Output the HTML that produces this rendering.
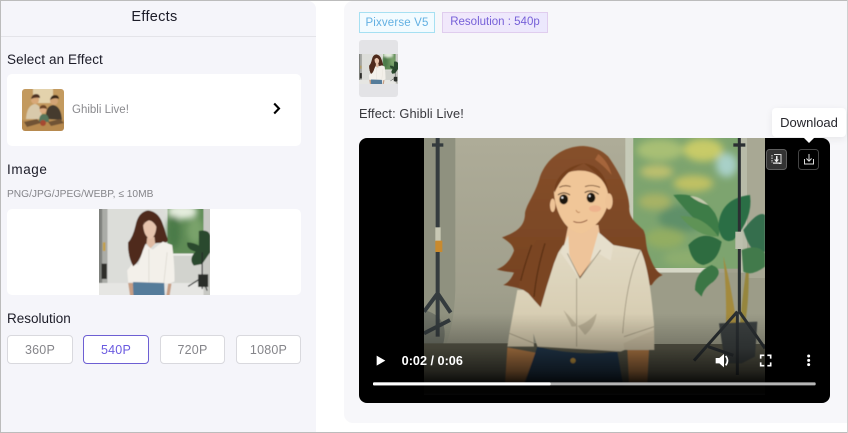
<!DOCTYPE html>
<html lang="en">
<head>
<meta charset="utf-8">
<title>Effects</title>
<style>
html,body{margin:0;padding:0;width:848px;height:433px;overflow:hidden;background:#fff;font-family:"Liberation Sans",sans-serif}
#r{position:relative;width:848px;height:433px;overflow:hidden;background:#fff}
.a{position:absolute;box-sizing:border-box;white-space:nowrap}
.l{font-size:13.5px;color:#1c1c28;letter-spacing:.1px;line-height:16px;height:16px}
.b{top:335px;height:29px;background:#fff;border:1px solid #d9d9de;border-radius:4px;font-size:12.5px;color:#85858a;text-align:center;line-height:28px;letter-spacing:.2px}
svg{position:absolute;display:block}
</style>
</head>
<body>
<div id="r">
<svg width="0" height="0" style="position:absolute">
<defs>
<filter id="pb" x="-5%" y="-5%" width="110%" height="110%"><feGaussianBlur stdDeviation="1.4"/></filter>
<filter id="pg" x="-20%" y="-20%" width="140%" height="140%"><feGaussianBlur stdDeviation="9"/></filter>
<symbol id="photo" viewBox="0 0 334 258" preserveAspectRatio="xMidYMid slice">
<g filter="url(#pb)">
<rect x="-4" y="-4" width="342" height="266" fill="#d8d9d5"/>
<rect x="-4" y="-4" width="30" height="266" fill="#7f817d"/>
<rect x="10" y="-4" width="16" height="266" fill="#aaaca7"/>
<path d="M8 164h16v46H8z" fill="#2d2d2b"/><rect x="12" y="100" width="8" height="26" fill="#c2a04c"/>
<rect x="26" y="-4" width="180" height="266" fill="#dcddd9"/>
<rect x="-4" y="222" width="342" height="40" fill="#e6e6e3"/>
<rect x="206" y="-4" width="108" height="138" fill="#5f8c56"/>
<g filter="url(#pg)"><ellipse cx="250" cy="8" rx="45" ry="22" fill="#e4ecdd"/><ellipse cx="225" cy="70" rx="20" ry="50" fill="#4c7a48"/><ellipse cx="290" cy="65" rx="24" ry="40" fill="#79a26a"/></g>
<rect x="206" y="134" width="108" height="6" fill="#efefeb"/>
<rect x="206" y="140" width="128" height="82" fill="#d2d3ce"/>
<rect x="314" y="-4" width="24" height="266" fill="#c8c9c4"/>
<path d="M300 66Q330 60 334 80V130L310 165 285 170Q268 150 290 128 262 120 265 100Q285 100 300 110Z" fill="#2a4a2d"/>
<path d="M310 130V240M310 205L268 232M310 205L325 245" stroke="#26292a" stroke-width="3.5" fill="none"/>
<rect x="298" y="196" width="30" height="38" fill="#2b2d2b"/>
<path d="M148 4Q118 8 110 50 102 85 88 100 86 140 103 172 120 160 130 125L140 105 200 100Q212 100 203 80 198 60 190 40 178 8 148 4Z" fill="#4f2c1d"/>
<path d="M145 86l22-2 2 20-14 14-12-14z" fill="#e0bba3"/>
<path d="M138 107L162 122 192 98 220 108Q228 170 227 218L209 224 193 222 108 220 88 220 85 184 104 160 118 168Z" fill="#f3f0ea"/>
<path d="M150 120V220M205 130L195 222" stroke="#d8d4cc" stroke-width="2" fill="none"/>
<path d="M103 219L196 222 198 262H93Z" fill="#557b9a"/>
<path d="M88 222l6 40h10l-2-40zM208 224l-6 38h10l6-38z" fill="#c79e84"/>
<path d="M118 40Q105 85 88 100 86 140 103 172 122 160 132 125L142 100 134 60Z" fill="#4f2c1d"/>
<path d="M133 50Q135 30 155 30 176 35 172 60 168 85 155 90 136 84 133 50Z" fill="#e6c3ac"/>
<path d="M133 50Q140 20 160 22 178 30 176 60 165 35 150 34 138 38 133 50Z" fill="#4f2c1d"/>
</g>
</symbol>
<filter id="sf" x="-5%" y="-5%" width="110%" height="110%"><feGaussianBlur stdDeviation="1.6"/></filter>
<filter id="sg" x="-20%" y="-20%" width="140%" height="140%"><feGaussianBlur stdDeviation="11"/></filter>
<filter id="tb" x="-5%" y="-5%" width="110%" height="110%"><feGaussianBlur stdDeviation=".6"/></filter>
<linearGradient id="fade" x1="0" y1="0" x2="0" y2="1">
<stop offset="0" stop-color="#000" stop-opacity="0"/>
<stop offset=".5" stop-color="#000" stop-opacity=".25"/>
<stop offset=".82" stop-color="#000" stop-opacity=".6"/>
<stop offset="1" stop-color="#000" stop-opacity=".9"/>
</linearGradient>
<linearGradient id="wall" x1="0" y1="0" x2="0" y2="1">
<stop offset="0" stop-color="#aeac98"/>
<stop offset=".6" stop-color="#a09f8c"/>
<stop offset="1" stop-color="#868776"/>
</linearGradient>
<linearGradient id="hair" x1="0" y1="0" x2="0" y2="1">
<stop offset="0" stop-color="#86502b"/>
<stop offset="1" stop-color="#744020"/>
</linearGradient>
<linearGradient id="shirt" x1="0" y1="0" x2="0" y2="1">
<stop offset="0" stop-color="#e2dac4"/>
<stop offset="1" stop-color="#d2c7aa"/>
</linearGradient>
<linearGradient id="tg" x1="0" y1="0" x2="1" y2="0">
<stop offset="0" stop-color="#f1e8fb"/>
<stop offset="1" stop-color="#ece8fd"/>
</linearGradient>
</defs>
</svg>

<!-- window frame -->
<div class="a" style="left:0;top:0;width:848px;height:1px;background:#bcbcbc"></div>
<div class="a" style="left:0;top:432px;width:848px;height:1px;background:#bcbcbc"></div>
<div class="a" style="left:0;top:0;width:1px;height:433px;background:#bcbcbc"></div>
<div class="a" style="left:847px;top:0;width:1px;height:433px;background:#cfcfcf"></div>

<!-- left panel -->
<div class="a" style="left:1px;top:1px;width:315px;height:431px;background:#f5f5fa;border-top-right-radius:8px"></div>
<div class="a" style="left:1px;top:36px;width:315px;height:1px;background:#e4e4e9"></div>
<div class="a" style="left:1px;top:8px;width:307px;text-align:center;font-size:14.5px;line-height:18px;color:#1c1c28;letter-spacing:.3px">Effects</div>
<div class="a l" style="left:7px;top:52px">Select an Effect</div>

<div class="a" style="left:7px;top:74px;width:294px;height:72px;background:#fff;border-radius:5px"></div>
<svg style="left:22px;top:89px" width="42" height="42" viewBox="0 0 42 42">
<clipPath id="c1"><rect width="42" height="42" rx="3"/></clipPath>
<g clip-path="url(#c1)"><g filter="url(#tb)">
<rect x="-2" y="-2" width="46" height="46" fill="#c39a5f"/>
<rect x="11" y="-2" width="20" height="16" fill="#e3d2ac"/>
<rect x="-2" y="31" width="46" height="13" fill="#b78a50"/>
<path d="M4 30q1-14 9-15 7 1 7 15z" fill="#d8c9ab"/>
<circle cx="13" cy="11" r="4" fill="#d8a878"/>
<path d="M9 10q1-5 5-5 4 0 4 4-5-1-9 1z" fill="#4f3120"/>
<path d="M24 30q-1-13 7-14 8 1 9 15z" fill="#453b2e"/>
<circle cx="32" cy="12" r="4" fill="#d3a475"/>
<path d="M28 11q1-5 5-5 4 0 4 4-4-2-9 1z" fill="#3a2618"/>
<path d="M17 33q0-8 5-8 5 0 5 8z" fill="#55755a"/>
<circle cx="21" cy="21" r="3.4" fill="#dcab80"/>
<path d="M17.5 20q0-4 4-4 3 0 3.500 4-4-1.500-7.500 0z" fill="#6d4426"/>
<circle cx="21" cy="34" r="3" fill="#a64a30"/>
<path d="M2 33l13-3 4 4-14 4zM26 33l12-3 4 4-13 3z" fill="#6f5336"/>
</g></g>
</svg>
<div class="a" style="left:72px;top:102px;font-size:11.5px;line-height:17px;color:#8a8a8e">Ghibli Live!</div>
<svg style="left:272px;top:102px" width="10" height="13" viewBox="0 0 10 13"><path d="M2.200 1.500L7 6.500 2.200 11.500" fill="none" stroke="#000" stroke-width="2.100"/></svg>

<div class="a l" style="left:7px;top:162px;letter-spacing:.6px">Image</div>
<div class="a" style="left:7px;top:187px;font-size:10.2px;line-height:15px;color:#85858a">PNG/JPG/JPEG/WEBP, ≤ 10MB</div>
<div class="a" style="left:7px;top:209px;width:294px;height:86px;background:#fff;border-radius:5px"></div>
<svg style="left:99px;top:209px" width="111" height="86"><use href="#photo" width="111" height="86"/></svg>

<div class="a l" style="left:7px;top:311px;letter-spacing:0">Resolution</div>
<div class="a b" style="left:7px;width:66px">360P</div>
<div class="a b" style="left:83px;width:66px;border-color:#6d5fd3;color:#6a5ae0">540P</div>
<div class="a b" style="left:160px;width:65px">720P</div>
<div class="a b" style="left:236px;width:65px">1080P</div>

<!-- right panel -->
<div class="a" style="left:344px;top:1px;width:503px;height:422px;background:#f7f7fa;border-top-left-radius:9px;border-bottom-left-radius:9px"></div>
<div class="a" style="left:359px;top:12px;width:76px;height:21px;background:#f2fbff;border:1px solid #a6e0f2;font-size:11.5px;line-height:20px;text-align:center;color:#62b0e2;letter-spacing:.15px">Pixverse V5</div>
<svg style="left:442px;top:12px" width="106" height="21"><rect x=".5" y=".5" width="105" height="20" fill="url(#tg)" stroke="#e0cdee"/></svg>
<div class="a" style="left:442px;top:12px;width:106px;height:21px;font-size:11.5px;line-height:21px;text-align:center;color:#7660d8">Resolution : 540p</div>
<div class="a" style="left:359px;top:40px;width:39px;height:57px;background:#e3e3e6;border-radius:3px"></div>
<svg style="left:359px;top:54px" width="39" height="30"><use href="#photo" width="39" height="30"/></svg>
<div class="a" style="left:359px;top:106px;font-size:12.8px;line-height:16px;color:#37373c;letter-spacing:.1px">Effect: Ghibli Live!</div>

<!-- video -->
<div class="a" style="left:359px;top:138px;width:471px;height:265px;background:#000;border-radius:8px"></div>
<svg style="left:350px;top:130px" width="498" height="290" viewBox="0 0 1494 870">
<clipPath id="vc"><rect x="222" y="24" width="1023" height="770"/></clipPath>
<g clip-path="url(#vc)">
<rect x="222" y="24" width="1023" height="770" fill="url(#wall)"/>
<!-- darker left wall + backdrop curve -->
<path d="M222 24H316V480Q312 590 285 650H222Z" fill="#8f917f"/>
<path d="M222 540Q300 560 280 640 250 660 222 650Z" fill="#6f7368"/>
<rect x="222" y="640" width="1023" height="150" fill="#585748"/>
<!-- window -->
<rect x="826" y="24" width="24" height="392" fill="#c6cab8"/>
<rect x="850" y="24" width="315" height="392" fill="#7da46f"/>
<g filter="url(#sg)">
<ellipse cx="930" cy="60" rx="70" ry="32" fill="#a8bf74"/>
<ellipse cx="1060" cy="60" rx="60" ry="34" fill="#c8cb68"/>
<ellipse cx="1130" cy="105" rx="32" ry="36" fill="#a8d0c8"/>
<ellipse cx="920" cy="125" rx="50" ry="20" fill="#bdc06e"/>
<ellipse cx="1030" cy="160" rx="60" ry="24" fill="#c0c164"/>
<ellipse cx="915" cy="215" rx="50" ry="24" fill="#a7b265"/>
<ellipse cx="1000" cy="265" rx="75" ry="40" fill="#5f9069"/>
<ellipse cx="945" cy="325" rx="60" ry="30" fill="#93ad62"/>
<ellipse cx="1010" cy="385" rx="70" ry="26" fill="#8dad6e"/>
</g>
<rect x="1165" y="24" width="26" height="510" fill="#b8bba8"/>
<rect x="850" y="414" width="230" height="14" fill="#d6d7c6"/>
<rect x="850" y="428" width="395" height="214" fill="#9c9c88"/>
<rect x="1191" y="24" width="54" height="420" fill="#a8a894"/>
<!-- plant -->
<g filter="url(#sf)">
<path d="M1160 580Q1140 450 1120 380 1130 480 1128 580Z" fill="#a38a3e"/>
<path d="M1170 580Q1180 470 1195 380 1200 500 1185 580Z" fill="#96863d"/>
<path d="M970 195Q1050 185 1095 250 1115 290 1105 320 1040 285 970 195Z" fill="#3e7b47"/>
<path d="M1020 198Q1050 198 1075 225 1045 218 1020 198Z" fill="#c4c9ac"/>
<path d="M990 258Q1060 255 1105 320 1040 320 990 258Z" fill="#5f9356"/>
<path d="M1105 290Q1110 205 1200 195 1210 265 1150 330 1115 345 1105 290Z" fill="#2c6e45"/>
<path d="M1180 300Q1225 240 1245 255V365Q1205 385 1180 300Z" fill="#356e4d"/>
<path d="M1015 345Q1060 295 1115 335 1105 395 1060 405 1025 400 1015 345Z" fill="#2f6c41"/>
<path d="M1035 480Q1035 425 1085 405 1125 420 1090 455 1060 475 1055 500Z" fill="#3a7644"/>
<path d="M1175 360Q1225 340 1245 370V410Q1205 440 1180 425Z" fill="#437a4b"/>
<path d="M1107 580L1222 575 1215 680 1175 700H1125Z" fill="#3b403f"/>
</g>
<!-- right stand -->
<path d="M1168 24V545M1162 545L1032 692M1168 545L1245 655M1162 545V735M1075 650L1150 676" fill="none" stroke="#2a2f32" stroke-width="9"/>
<rect x="1150" y="40" width="36" height="10" fill="#2a2f32"/>
<rect x="1156" y="305" width="22" height="52" fill="#bdc0ae"/>
<!-- left stand -->
<path d="M263 24V620M263 490L222 545M263 490L302 548M222 610L300 570" fill="none" stroke="#343b3e" stroke-width="12"/>
<rect x="246" y="40" width="34" height="10" fill="#343b3e"/>
<rect x="256" y="292" width="16" height="42" fill="#c8c8b4"/>
<rect x="256" y="332" width="21" height="34" fill="#c98a2e"/>
<!-- person -->
<g filter="url(#sf)">
<!-- hair -->
<path d="M700 48C640 48 590 85 570 140C555 195 530 220 525 250C525 285 505 305 456 322C475 335 490 345 492 362C480 395 460 412 440 418C462 425 480 425 492 428C485 445 475 458 460 465C490 470 520 475 535 490C550 510 560 522 572 530C640 500 820 480 905 465C915 450 925 440 938 435C915 425 905 395 895 370C885 340 890 320 880 300C860 280 835 265 838 230C835 180 810 130 775 80C755 60 730 50 700 48Z" fill="url(#hair)"/>
<path d="M745 72Q775 95 785 135 765 110 735 88Z" fill="#a5653a"/>
<!-- neck -->
<path d="M655 285H745L755 350 690 440 640 360Z" fill="#eec49a"/>
<!-- shirt -->
<path d="M640 345L690 445 752 350 790 345 872 360C895 410 905 500 912 580L913 660 824 660 812 665 562 650 550 610 552 650 472 650 478 610 502 480 552 480 590 420Z" fill="url(#shirt)"/>
<path d="M655 315L632 368 688 445 658 375ZM745 306L790 345 782 392 745 370 720 395Z" fill="#e6dfcc"/>
<path d="M652 370L690 445 752 360M680 445V650M478 610L552 640M822 620L912 590M872 360Q830 440 818 610" fill="none" stroke="#8f8670" stroke-width="2"/>
<path d="M640 540Q670 570 705 615 735 590 740 550 700 590 665 590Z" fill="#b8ae94"/>
<path d="M820 640L912 600 912 660 824 660Z" fill="#cbbfa3"/>
<!-- front hair lock over shirt -->
<path d="M640 330L612 400 590 470 572 532 552 510 535 490 505 470 520 400 560 330Z" fill="#7a4421"/>
<path d="M545 345Q525 400 512 452M585 340Q560 420 552 500" fill="none" stroke="#5a3014" stroke-width="4"/>
<!-- arms, jeans -->
<path d="M472 652L557 668 522 760H465Z" fill="#b57b47"/>
<path d="M832 660H897L892 760H837Z" fill="#b57b47"/>
<path d="M562 650Q680 680 802 665L820 770H522Z" fill="#24394d"/>
<circle cx="669" cy="692" r="8" fill="#c59a42"/>
<!-- face -->
<path d="M612 180C622 135 655 122 690 122C735 122 772 150 776 205C772 250 745 285 705 307C690 314 675 308 660 297C630 272 612 225 612 180Z" fill="#f0c698"/>
<path d="M612 180C618 140 650 108 702 100C660 118 635 140 614 188ZM702 100C745 105 770 140 778 192C765 150 735 125 702 100Z" fill="#74401f"/>
<ellipse cx="777" cy="214" rx="11" ry="24" fill="#eec396"/>
<ellipse cx="608" cy="226" rx="8" ry="20" fill="#eec396"/>
<ellipse cx="641" cy="208" rx="13" ry="15" fill="#1d140d"/>
<ellipse cx="723" cy="203" rx="13" ry="15" fill="#1d140d"/>
<circle cx="637" cy="203" r="3" fill="#fff"/><circle cx="719" cy="198" r="3" fill="#fff"/>
<path d="M624 195Q640 182 660 195M704 188Q724 176 746 193" fill="none" stroke="#3a2413" stroke-width="3"/>
<path d="M628 172Q645 163 662 170M705 170Q725 162 750 172" fill="none" stroke="#5a3216" stroke-width="2.500"/>
<path d="M678 240Q682 250 690 246" fill="none" stroke="#a86c40" stroke-width="2"/>
<path d="M670 274Q690 283 712 270" fill="none" stroke="#7f3f26" stroke-width="2.500"/>
<ellipse cx="735" cy="236" rx="18" ry="10" fill="#eeb48e"/>
</g>
<rect x="222" y="550" width="1023" height="212" fill="url(#fade)"/>
<rect x="222" y="760" width="1023" height="40" fill="#000" opacity=".97"/>
</g>

<!-- progress -->
<rect x="69" y="757" width="1328" height="9" rx="3" fill="#b6b6b6"/>
<rect x="69" y="757" width="533" height="9" rx="3" fill="#fff"/>
<!-- controls -->
<path d="M80 677L106 692 80 707Z" fill="#fff"/>
<text x="155" y="705" font-family="Liberation Sans, sans-serif" font-weight="700" font-size="38" fill="#fff">0:02 / 0:06</text>
<path d="M1097 684H1108L1122 672V712L1108 700H1097Z" fill="#fff"/>
<path d="M1127 678Q1138 692 1127 706" fill="none" stroke="#fff" stroke-width="5"/>
<path d="M1232 686V676H1243M1252 676H1262V686M1262 697V707H1252M1243 707H1232V697" fill="none" stroke="#fff" stroke-width="5"/>
<circle cx="1376" cy="678" r="4.500" fill="#fff"/><circle cx="1376" cy="691" r="4.500" fill="#fff"/><circle cx="1376" cy="704" r="4.500" fill="#fff"/>
</svg>

<!-- overlay buttons -->
<svg style="left:765px;top:148px" width="56" height="24" viewBox="0 0 56 24">
<rect x="1.500" y="1.500" width="20" height="20" rx="3" fill="#333" stroke="#5e5e5e"/>
<path d="M9 6.500H16V15.500H14" fill="none" stroke="#e0e0e0" stroke-width="1"/>
<path d="M7 7v8" stroke="#e0e0e0" stroke-width="1" stroke-dasharray="1.500 1"/>
<path d="M11 8V11.500H9L11.500 14.500 14 11.500H12.500V8Z" fill="#f0f0f0"/>
<rect x="8" y="14.500" width="7" height="1.200" fill="#f0f0f0"/>
<rect x="33.500" y="1.500" width="20" height="20" rx="3" fill="#000" stroke="#444"/>
<path d="M39.500 11V16H48.500V11" fill="none" stroke="#ddd" stroke-width="1"/>
<path d="M44 6V13M41.400 10.500L44 13.200 46.600 10.500" fill="none" stroke="#ddd" stroke-width="1"/>
</svg>

<!-- tooltip -->
<div class="a" style="left:772px;top:108px;width:74px;height:29px;background:#fff;border-radius:4px;box-shadow:0 2px 8px rgba(0,0,0,.07);font-size:13px;line-height:29px;text-align:center;color:#26262c">Download</div>
<svg style="left:803px;top:137px" width="12" height="7"><path d="M0 0H12L6 6Z" fill="#fff"/></svg>
</div>
</body>
</html>
